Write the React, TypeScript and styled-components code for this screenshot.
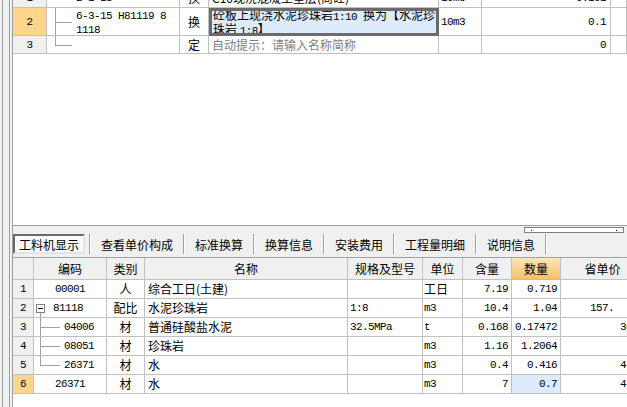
import React from "react";
import styled, { createGlobalStyle } from "styled-components";

const GlobalStyle = createGlobalStyle`
  html, body {
    margin: 0;
    padding: 0;
  }
  body {
    width: 627px;
    height: 407px;
    overflow: hidden;
    background: #f0f0f0;
    font-family: "Noto Sans CJK SC", "Liberation Sans", sans-serif;
    font-size: 12px;
    color: #000;
  }
`;

const Window = styled.div`
  display: flex;
  width: 627px;
  height: 407px;
  background: #f0f0f0;
  overflow: hidden;
`;

const Splitter = styled.div`
  flex: none;
  width: 12px;
  box-sizing: border-box;
  padding: 0 2px;
  display: flex;
`;

const SplitterBar = styled.div`
  flex: 1;
  border-left: 1px solid #a0a0a0;
  border-right: 1px solid #a0a0a0;
`;

const Main = styled.div`
  flex: 1;
  min-width: 0;
  display: flex;
  flex-direction: column;
  border-left: 1px solid #a0a0a0;
`;

const UpperGrid = styled.div`
  flex: none;
  height: 226px;
  box-sizing: border-box;
  background: #fff;
  border-bottom: 1px solid #a0a0a0;
  overflow: hidden;
`;

// grid is scrolled a bit, first row only half visible
const UpperBody = styled.div`
  margin-top: -12px;
`;

const UpperRow = styled.div<{ $h: number }>`
  display: grid;
  grid-template-columns: 34px 133px 29px 230px 43px 129px 1fr;
  height: ${(p) => p.$h}px;
`;

const Cell = styled.div<{ $align?: "left" | "center" | "right"; $bg?: string; $pad?: string }>`
  box-sizing: border-box;
  display: flex;
  align-items: center;
  justify-content: ${(p) =>
    p.$align === "center" ? "center" : p.$align === "right" ? "flex-end" : "flex-start"};
  padding: ${(p) => p.$pad ?? "0 3px"};
  border-right: 1px solid #c0c0c0;
  border-bottom: 1px solid #c0c0c0;
  background: ${(p) => p.$bg ?? "transparent"};
  white-space: nowrap;
  overflow: hidden;
  line-height: 12px;
`;

const EditCell = styled(Cell)`
  align-items: flex-start;
  padding: 1px 4px 0;
  background: #dcecfc;
  outline: 3px solid #6b6b6b;
  outline-offset: -3px;
`;

const TwoLines = styled.span`
  display: block;
  line-height: 12px;
`;

const Mono = styled.span`
  font-family: "Liberation Mono", "DejaVu Sans Mono", monospace;
  font-size: 11px;
  letter-spacing: -0.6px;
`;

const Hint = styled.span`
  color: #808080;
`;

const Branch = styled.span<{ $last?: boolean; $left: number; $len: number }>`
  position: relative;
  flex: none;
  align-self: stretch;
  width: ${(p) => p.$len}px;
  margin-left: ${(p) => p.$left}px;
  margin-right: 4px;
  &::before {
    content: "";
    position: absolute;
    left: 0;
    top: 0;
    height: ${(p) => (p.$last ? "50%" : "100%")};
    border-left: 1px solid #a0a0a0;
  }
  &::after {
    content: "";
    position: absolute;
    left: 0;
    right: 0;
    top: 50%;
    border-top: 1px solid #a0a0a0;
  }
`;

const ExpandBox = styled.span`
  position: relative;
  flex: none;
  width: 9px;
  height: 9px;
  box-sizing: border-box;
  margin: 0 8px 0 2px;
  border: 1px solid #808080;
  background: #fff;
  display: flex;
  align-items: center;
  justify-content: center;
  &::before {
    content: "";
    width: 5px;
    border-top: 1px solid #000;
  }
  &::after {
    content: "";
    position: absolute;
    left: 3px;
    top: 8px;
    height: 6px;
    border-left: 1px solid #a0a0a0;
  }
`;

const TabBar = styled.div`
  flex: none;
  height: 31px;
  display: flex;
  flex-direction: column;
`;

const TabBarTop = styled.div`
  height: 8px;
  box-sizing: border-box;
  padding: 1px 3px 0 0;
  display: flex;
  justify-content: flex-end;
  align-items: flex-start;
`;

const MiniScroll = styled.div`
  width: 100px;
  height: 6px;
  box-sizing: border-box;
  border: 1px solid #808080;
  background: #fff;
  display: flex;
  align-items: center;
  justify-content: space-between;
  padding: 0 6px;
`;

const Dot = styled.span`
  width: 1px;
  height: 1px;
  background: #000080;
`;

const Tabs = styled.div`
  height: 20px;
  display: flex;
  align-items: stretch;
`;

const Tab = styled.div<{ $active?: boolean }>`
  display: flex;
  align-items: center;
  box-sizing: border-box;
  padding: ${(p) => (p.$active ? "0 4px" : "0 10px")};
  margin-right: ${(p) => (p.$active ? "4px" : "0")};
  border: ${(p) => (p.$active ? "2px solid" : "none")};
  border-color: #6a6a6a #e4e4e4 #e4e4e4 #6a6a6a;
  background: ${(p) => (p.$active ? "#fafafa" : "transparent")};
  white-space: nowrap;
`;

const TabSep = styled.span`
  width: 0;
  border-left: 1px solid #a0a0a0;
  border-right: 1px solid #fff;
`;

const LowerGrid = styled.div`
  flex: 1;
  background: #fff;
  border-top: 1px solid #a0a0a0;
  overflow: hidden;
`;

const LowerRow = styled.div<{ $h: number }>`
  display: grid;
  grid-template-columns: 21px 73px 38px 203px 75px 40px 49px 49px 84px;
  height: ${(p) => p.$h}px;
`;

const HeadCell = styled(Cell)<{ $hot?: boolean }>`
  justify-content: center;
  background: ${(p) => (p.$hot ? "linear-gradient(#fde6b8, #f3c066)" : "#f0f0f0")};
`;

const PriceText = styled(Mono)`
  white-space: pre;
`;

const ROWNUM_BG = "#f0f0f0";
const ORANGE = "#fed68b";

type Material = {
  code: string;
  kind: string;
  name: string;
  spec: string;
  unit: string;
  qty: string;
  amount: string;
  price: string;
  tree?: "parent" | "child" | "last";
};

const materials: Material[] = [
  { code: "00001", kind: "人", name: "综合工日(土建)", spec: "", unit: "工日", qty: "7.19", amount: "0.719", price: "" },
  { code: "81118", kind: "配比", name: "水泥珍珠岩", spec: "1:8", unit: "m3", qty: "10.4", amount: "1.04", price: "157.    ", tree: "parent" },
  { code: "04006", kind: "材", name: "普通硅酸盐水泥", spec: "32.5MPa", unit: "t", qty: "0.168", amount: "0.17472", price: "360", tree: "child" },
  { code: "08051", kind: "材", name: "珍珠岩", spec: "", unit: "m3", qty: "1.16", amount: "1.2064", price: "", tree: "child" },
  { code: "26371", kind: "材", name: "水", spec: "", unit: "m3", qty: "0.4", amount: "0.416", price: "4.6", tree: "last" },
  { code: "26371", kind: "材", name: "水", spec: "", unit: "m3", qty: "7", amount: "0.7", price: "4.6" },
];

const tabs = ["查看单价构成", "标准换算", "换算信息", "安装费用", "工程量明细", "说明信息"];

const isMono = (s: string) => /^[\x00-\x7f]*$/.test(s);

const Text: React.FC<{ value: string }> = ({ value }) =>
  isMono(value) ? <Mono>{value}</Mono> : <span>{value}</span>;

const CodeCell: React.FC<{ m: Material }> = ({ m }) => {
  if (m.tree === "parent") {
    return (
      <Cell $pad="0">
        <ExpandBox />
        <Mono>{m.code}</Mono>
      </Cell>
    );
  }
  if (m.tree) {
    return (
      <Cell $pad="0">
        <Branch $left={6} $len={20} $last={m.tree === "last"} />
        <Mono>{m.code}</Mono>
      </Cell>
    );
  }
  return (
    <Cell $align="center">
      <Mono>{m.code}</Mono>
    </Cell>
  );
};

const App: React.FC = () => {
  return (
    <>
      <GlobalStyle />
      <Window>
        <Splitter>
          <SplitterBar />
        </Splitter>
        <Main>
          <UpperGrid>
            <UpperBody>
              <UpperRow $h={20}>
                <Cell $align="center" $bg={ROWNUM_BG}>
                  <Mono>1</Mono>
                </Cell>
                <Cell $pad="0 0 0 29px">
                  <Mono>2-1-18</Mono>
                </Cell>
                <Cell $align="center">换</Cell>
                <Cell>C10现浇混凝土垫层(商砼)</Cell>
                <Cell $pad="0 2px">
                  <Mono>10m3</Mono>
                </Cell>
                <Cell $align="right" $pad="0 4px">
                  <Mono>0.101</Mono>
                </Cell>
                <Cell />
              </UpperRow>
              <UpperRow $h={28}>
                <Cell $align="center" $bg={ORANGE}>
                  <Mono>2</Mono>
                </Cell>
                <Cell $pad="0">
                  <Branch $left={8} $len={17} />
                  <TwoLines>
                    <Mono>6-3-15 H81119 8</Mono>
                    <br />
                    <Mono>1118</Mono>
                  </TwoLines>
                </Cell>
                <Cell $align="center">换</Cell>
                <EditCell>
                  <TwoLines>
                    砼板上现浇水泥珍珠岩<Mono>1:10 </Mono>换为【水泥珍
                    <br />
                    珠岩 <Mono>1:8</Mono>】
                  </TwoLines>
                </EditCell>
                <Cell $pad="0 2px">
                  <Mono>10m3</Mono>
                </Cell>
                <Cell $align="right" $pad="0 4px">
                  <Mono>0.1</Mono>
                </Cell>
                <Cell />
              </UpperRow>
              <UpperRow $h={18}>
                <Cell $align="center" $bg={ROWNUM_BG}>
                  <Mono>3</Mono>
                </Cell>
                <Cell $pad="0">
                  <Branch $left={8} $len={17} $last />
                </Cell>
                <Cell $align="center">定</Cell>
                <Cell>
                  <Hint>自动提示：请输入名称简称</Hint>
                </Cell>
                <Cell />
                <Cell $align="right" $pad="0 4px">
                  <Mono>0</Mono>
                </Cell>
                <Cell />
              </UpperRow>
            </UpperBody>
          </UpperGrid>

          <TabBar>
            <TabBarTop>
              <MiniScroll>
                <Dot />
                <Dot />
              </MiniScroll>
            </TabBarTop>
            <Tabs>
              <Tab $active>工料机显示</Tab>
              {tabs.map((t) => (
                <React.Fragment key={t}>
                  <TabSep />
                  <Tab>{t}</Tab>
                </React.Fragment>
              ))}
              <TabSep />
            </Tabs>
          </TabBar>

          <LowerGrid>
            <LowerRow $h={22}>
              <HeadCell />
              <HeadCell>编码</HeadCell>
              <HeadCell>类别</HeadCell>
              <HeadCell>名称</HeadCell>
              <HeadCell>规格及型号</HeadCell>
              <HeadCell>单位</HeadCell>
              <HeadCell>含量</HeadCell>
              <HeadCell $hot>数量</HeadCell>
              <HeadCell>省单价</HeadCell>
            </LowerRow>
            {materials.map((m, i) => {
              const last = i === materials.length - 1;
              return (
                <LowerRow $h={19} key={i}>
                  <Cell $align="center" $bg={last ? ORANGE : ROWNUM_BG}>
                    <Mono>{i + 1}</Mono>
                  </Cell>
                  <CodeCell m={m} />
                  <Cell $align="center">{m.kind}</Cell>
                  <Cell>{m.name}</Cell>
                  <Cell $pad="0 2px">
                    <Mono>{m.spec}</Mono>
                  </Cell>
                  <Cell $pad="0 1px">
                    <Text value={m.unit} />
                  </Cell>
                  <Cell $align="right">
                    <Mono>{m.qty}</Mono>
                  </Cell>
                  <Cell $align="right" $bg={last ? "#dcecfc" : undefined}>
                    <Mono>{m.amount}</Mono>
                  </Cell>
                  <Cell $align="right" $pad="0 6px 0 3px">
                    <PriceText>{m.price}</PriceText>
                  </Cell>
                </LowerRow>
              );
            })}
          </LowerGrid>
        </Main>
      </Window>
    </>
  );
};

export default App;
